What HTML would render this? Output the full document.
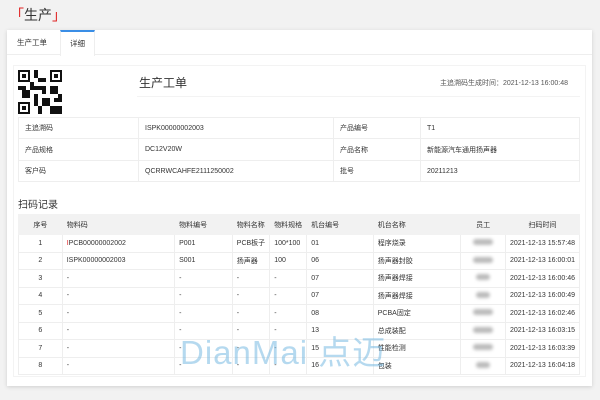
<!DOCTYPE html>
<html><head><meta charset="utf-8"><style>
*{margin:0;padding:0;box-sizing:border-box}
body{width:600px;height:400px;background:#f2f2f2;font-family:"Liberation Sans","Noto Sans CJK SC",sans-serif;color:#333;position:relative;overflow:hidden;font-size:7px}
.t{position:absolute;left:10px;top:5px;font-size:14px;color:#333}
.t b{color:#e02020;font-weight:normal}
.card{position:absolute;left:7px;top:30px;width:585px;height:356px;background:#fff;box-shadow:0 1px 4px rgba(0,0,0,.15)}
.tabs{position:absolute;left:0;top:0;width:100%;height:25px;border-bottom:1px solid #eee}
.tab{position:absolute;top:0;height:25px;line-height:25px;font-size:7.5px}
.tab.a{border-top:2px solid #3a8ee6;border-left:1px solid #eee;border-right:1px solid #eee;background:#fff;height:26px;line-height:23px}
.abs{position:absolute}
table{border-collapse:collapse;position:absolute}
td{border:1px solid #eee;font-size:7px;padding:0 6px;white-space:nowrap}
.s td{text-align:left;padding:0 4px}
.s tr.h td{background:#f2f2f2;border-color:#f2f2f2}
.c{text-align:center!important}
.bl{display:inline-block;width:20px;height:6px;background:#bbb;filter:blur(1.5px);border-radius:3px}
</style></head><body>
<div class="t"><b>「</b>生产<b>」</b></div>
<div class="card">
<div class="tabs">
<div class="tab" style="left:10px">生产工单</div>
<div class="tab a" style="left:53px;width:35px;text-align:center">详细</div>
</div>
<div class="abs" style="left:6px;top:35px;width:573px;height:312px;border:1px solid #f3f3f3"></div>
<svg class="abs" style="left:11px;top:40px" width="44" height="44" viewBox="0 0 11 11">
<rect width="11" height="11" fill="#fff"/>
<g fill="#111">
<rect x="0" y="0" width="3" height="3"/><rect x="8" y="0" width="3" height="3"/><rect x="0" y="8" width="3" height="3"/>
<rect x="4" y="0" width="1" height="2"/><rect x="5" y="2" width="2" height="1"/><rect x="4" y="4" width="3" height="1"/>
<rect x="0" y="4" width="2" height="1"/><rect x="1" y="5" width="2" height="2"/><rect x="8" y="4" width="2" height="2"/>
<rect x="4" y="6" width="1" height="3"/><rect x="6" y="7" width="2" height="2"/><rect x="9" y="7" width="2" height="1"/>
<rect x="5" y="9" width="1" height="2"/><rect x="8" y="9" width="3" height="2"/><rect x="3" y="3" width="1" height="2"/><rect x="6" y="5" width="1" height="1"/><rect x="10" y="6" width="1" height="1"/>
</g>
<g fill="#fff"><rect x=".5" y=".5" width="2" height="2"/><rect x="8.5" y=".5" width="2" height="2"/><rect x=".5" y="8.5" width="2" height="2"/></g>
<g fill="#111"><rect x="1" y="1" width="1" height="1"/><rect x="9" y="1" width="1" height="1"/><rect x="1" y="9" width="1" height="1"/></g>
</svg>
<div class="abs" style="left:132px;top:44px;font-size:12px">生产工单</div>
<div class="abs" style="left:130px;top:66px;width:443px;border-top:1px solid #f3f3f3"></div>
<div class="abs" style="left:433px;top:48px;font-size:7px;color:#555">主追溯码生成时间：2021-12-13 16:00:48</div>
<table style="left:11px;top:87px;width:562px">
<tr style="height:21px"><td style="width:120px">主追溯码</td><td style="width:195px">ISPK00000002003</td><td style="width:87px">产品编号</td><td>T1</td></tr>
<tr style="height:22px"><td>产品规格</td><td>DC12V20W</td><td>产品名称</td><td>新能源汽车通用扬声器</td></tr>
<tr style="height:21px"><td>客户码</td><td>QCRRWCAHFE2111250002</td><td>批号</td><td>20211213</td></tr>
</table>
<div class="abs" style="left:11px;top:166px;font-size:10px">扫码记录</div>
<table class="s" style="left:11px;top:184px;width:562px">
<tr class="h" style="height:20px"><td class="c" style="width:44px">序号</td><td style="width:113px">物料码</td><td style="width:58px">物料编号</td><td style="width:37px">物料名称</td><td style="width:35px">物料规格</td><td style="width:67px">机台编号</td><td style="width:88px">机台名称</td><td class="c" style="width:45px">员工</td><td class="c">扫码时间</td></tr>
<tr style="height:17.5px"><td class="c">1</td><td><span style="color:#e02020">I</span>PCB00000002002</td><td>P001</td><td>PCB板子</td><td>100*100</td><td>01</td><td>程序烧录</td><td class="c"><span class="bl"></span></td><td class="c">2021-12-13 15:57:48</td></tr>
<tr style="height:17.5px"><td class="c">2</td><td>ISPK00000002003</td><td>S001</td><td>扬声器</td><td>100</td><td>06</td><td>扬声器封胶</td><td class="c"><span class="bl"></span></td><td class="c">2021-12-13 16:00:01</td></tr>
<tr style="height:17.5px"><td class="c">3</td><td>-</td><td>-</td><td>-</td><td>-</td><td>07</td><td>扬声器焊接</td><td class="c"><span class="bl" style="width:14px"></span></td><td class="c">2021-12-13 16:00:46</td></tr>
<tr style="height:17.5px"><td class="c">4</td><td>-</td><td>-</td><td>-</td><td>-</td><td>07</td><td>扬声器焊接</td><td class="c"><span class="bl" style="width:14px"></span></td><td class="c">2021-12-13 16:00:49</td></tr>
<tr style="height:17.5px"><td class="c">5</td><td>-</td><td>-</td><td>-</td><td>-</td><td>08</td><td>PCBA固定</td><td class="c"><span class="bl"></span></td><td class="c">2021-12-13 16:02:46</td></tr>
<tr style="height:17.5px"><td class="c">6</td><td>-</td><td>-</td><td>-</td><td>-</td><td>13</td><td>总成装配</td><td class="c"><span class="bl"></span></td><td class="c">2021-12-13 16:03:15</td></tr>
<tr style="height:17.5px"><td class="c">7</td><td>-</td><td>-</td><td>-</td><td>-</td><td>15</td><td>性能检测</td><td class="c"><span class="bl"></span></td><td class="c">2021-12-13 16:03:39</td></tr>
<tr style="height:17.5px"><td class="c">8</td><td>-</td><td>-</td><td>-</td><td>-</td><td>16</td><td>包装</td><td class="c"><span class="bl" style="width:14px"></span></td><td class="c">2021-12-13 16:04:18</td></tr>
</table>
</div>
<div class="abs" style="left:180px;top:333px;font-size:33px;line-height:40px;color:rgba(120,185,225,.55);letter-spacing:1px">DianMai 点迈</div>
</body></html>
